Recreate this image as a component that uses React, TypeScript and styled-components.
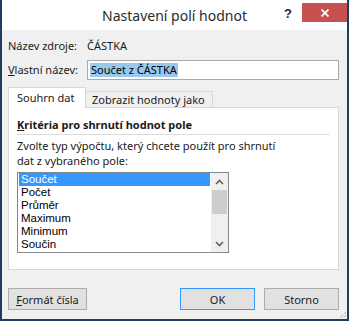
import styled, { createGlobalStyle } from "styled-components"

const GlobalStyle = createGlobalStyle`
  html, body {
    margin: 0;
    padding: 0;
    background: #ffffff;
  }
`

const items = ["Součet", "Počet", "Průměr", "Maximum", "Minimum", "Součin"]

const Window = styled.div`
  position: relative;
  width: 349px;
  height: 321px;
  box-sizing: border-box;
  border: 2px solid #1f3d5c;
  border-top: none;
  background: #f0f0f0;
  display: flex;
  flex-direction: column;
  font-family: "Noto Sans", "Open Sans", sans-serif;
  font-size: 11px;
  color: #000;
`

const TitleBar = styled.div`
  height: 30px;
  background: #ffffff;
  display: grid;
  grid-template-columns: 1fr auto 1fr;
`

const Title = styled.div`
  font-size: 14px;
  line-height: 30px;
  color: #2b2b2b;
  padding-top: 1px;
`

const Controls = styled.div`
  display: flex;
  justify-content: flex-end;
  align-items: flex-start;
`

const HelpButton = styled.div`
  width: 28px;
  height: 22px;
  margin-top: 2px;
  display: flex;
  align-items: center;
  justify-content: center;
  font-family: "Liberation Sans", sans-serif;
  font-weight: bold;
  font-size: 13px;
  color: #2a2a2a;
`

const CloseButton = styled.div`
  width: 45px;
  height: 19px;
  margin-top: 3px;
  background: #c75050;
  display: flex;
  align-items: center;
  justify-content: center;
`

const Body = styled.div`
  flex: 1;
  display: flex;
  flex-direction: column;
  padding: 0 8px 0 6px;
`

const FieldRow = styled.div<{ $top: number }>`
  display: flex;
  align-items: center;
  margin-top: ${(p) => p.$top}px;
`

const Label = styled.div`
  width: 79px;
  line-height: 16px;
  color: #1a1a1a;
`

const Value = styled.div`
  line-height: 16px;
  color: #1a1a1a;
`

const TextInput = styled.div`
  flex: 1;
  height: 20px;
  box-sizing: border-box;
  border: 1px solid #a9a9a9;
  background: #fff;
  display: flex;
  align-items: center;
  padding-left: 2px;
`

const Selected = styled.span`
  background: #99c9ef;
  line-height: 14px;
  padding: 0 1px;
`

const TabStrip = styled.div`
  display: flex;
  align-items: flex-end;
  height: 20px;
  margin-top: 8px;
  margin-bottom: -1px;
  position: relative;
  z-index: 1;
`

const Tab = styled.div<{ $active?: boolean; $width: number }>`
  box-sizing: border-box;
  width: ${(p) => p.$width}px;
  height: ${(p) => (p.$active ? 21 : 17)}px;
  border: 1px solid #d9d9d9;
  border-bottom: ${(p) => (p.$active ? "none" : "1px solid #d9d9d9")};
  border-left: ${(p) => (p.$active ? "1px solid #d9d9d9" : "none")};
  background: ${(p) => (p.$active ? "#ffffff" : "#f0f0f0")};
  padding-left: ${(p) => (p.$active ? 8 : 6)}px;
  line-height: ${(p) => (p.$active ? 19 : 16)}px;
  white-space: nowrap;
  color: #1a1a1a;
`

const Panel = styled.div`
  height: 163px;
  box-sizing: border-box;
  border: 1px solid #d9d9d9;
  background: #ffffff;
  padding: 9px 8px 0 8px;
  display: flex;
  flex-direction: column;
`

const GroupHeader = styled.div`
  font-weight: bold;
  line-height: 16px;
  padding-bottom: 1px;
  border-bottom: 1px solid #dcdcdc;
  color: #1a1a1a;
`

const Description = styled.div`
  margin-top: 3px;
  line-height: 15px;
  color: #1a1a1a;
`

const ListBox = styled.div`
  margin-top: 4px;
  width: 212px;
  height: 81px;
  box-sizing: border-box;
  border: 1px solid #828790;
  display: flex;
`

const ListItems = styled.div`
  flex: 1;
  padding: 0 1px;
  overflow: hidden;
`

const ListItem = styled.div<{ $selected?: boolean }>`
  height: 13px;
  line-height: 13px;
  padding-left: 2px;
  font-family: "Liberation Sans", Arial, sans-serif;
  font-size: 11.5px;
  background: ${(p) => (p.$selected ? "#3399ff" : "transparent")};
  color: ${(p) => (p.$selected ? "#ffffff" : "#000000")};
`

const ScrollBar = styled.div`
  width: 17px;
  background: #f0f0f0;
  display: flex;
  flex-direction: column;
`

const ArrowButton = styled.div`
  height: 17px;
  display: flex;
  align-items: center;
  justify-content: center;
`

const Track = styled.div`
  flex: 1;
`

const Thumb = styled.div`
  height: 24px;
  margin: 0 1px;
  background: #cdcdcd;
`

const ButtonRow = styled.div`
  display: flex;
  margin-top: 18px;
`

const Button = styled.div<{ $default?: boolean; $width: number }>`
  width: ${(p) => p.$width}px;
  height: 22px;
  box-sizing: border-box;
  border: 1px solid ${(p) => (p.$default ? "#3399ff" : "#adadad")};
  background: #e1e1e1;
  display: flex;
  align-items: center;
  justify-content: center;
  color: #1a1a1a;
  & + & {
    margin-left: 9px;
  }
`

const Spacer = styled.div`
  flex: 1;
`

const Grip = styled.svg`
  position: absolute;
  right: 0;
  bottom: 0;
`

const Chevron = ({ up }: { up?: boolean }) => (
  <svg width="9" height="6" viewBox="0 0 9 6">
    <path
      d={up ? "M1 5 L4.5 1.5 L8 5" : "M1 1 L4.5 4.5 L8 1"}
      fill="none"
      stroke="#606060"
      strokeWidth="1.6"
    />
  </svg>
)

export default function App() {
  return (
    <>
      <GlobalStyle />
      <Window>
        <TitleBar>
          <div />
          <Title>Nastavení polí hodnot</Title>
          <Controls>
            <HelpButton>?</HelpButton>
            <CloseButton>
              <svg width="8" height="8" viewBox="0 0 8 8">
                <path d="M0.5 0.5 L7.5 7.5 M7.5 0.5 L0.5 7.5" stroke="#fff" strokeWidth="1.8" />
              </svg>
            </CloseButton>
          </Controls>
        </TitleBar>
        <Body>
          <FieldRow $top={8}>
            <Label>Název zdroje:</Label>
            <Value>ČÁSTKA</Value>
          </FieldRow>
          <FieldRow $top={6}>
            <Label>
              <u>V</u>lastní název:
            </Label>
            <TextInput>
              <Selected>Součet z ČÁSTKA</Selected>
            </TextInput>
          </FieldRow>
          <TabStrip>
            <Tab $active $width={78}>Souhrn dat</Tab>
            <Tab $width={127}>Zobrazit hodnoty jako</Tab>
          </TabStrip>
          <Panel>
            <GroupHeader>
              <u>K</u>ritéria pro shrnutí hodnot pole
            </GroupHeader>
            <Description>
              Zvolte typ výpočtu, který chcete použít pro shrnutí
              <br />
              dat z vybraného pole:
            </Description>
            <ListBox>
              <ListItems>
                {items.map((item, i) => (
                  <ListItem key={item} $selected={i === 0}>
                    {item}
                  </ListItem>
                ))}
              </ListItems>
              <ScrollBar>
                <ArrowButton>
                  <Chevron up />
                </ArrowButton>
                <Track>
                  <Thumb />
                </Track>
                <ArrowButton>
                  <Chevron />
                </ArrowButton>
              </ScrollBar>
            </ListBox>
          </Panel>
          <ButtonRow>
            <Button $width={79}>
              <u>F</u>ormát čísla
            </Button>
            <Spacer />
            <Button $default $width={75}>OK</Button>
            <Button $width={75}>Storno</Button>
          </ButtonRow>
        </Body>
        <Grip width="10" height="10" viewBox="0 0 10 10">
          <path d="M9 3 L3 9 M9 6 L6 9" stroke="#8a8a8a" strokeWidth="1" strokeDasharray="1 1" />
        </Grip>
      </Window>
    </>
  )
}
